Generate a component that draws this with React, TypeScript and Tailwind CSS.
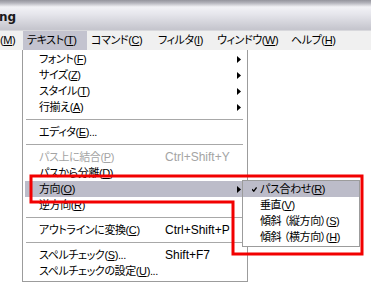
import React from "react";

type Row =
  | { sep: true }
  | {
      label: string;
      k: string;
      after?: string;
      shortcut?: string;
      sub?: boolean;
      disabled?: boolean;
      active?: boolean;
    };

const rows: Row[] = [
  { label: "フォント", k: "F", sub: true },
  { label: "サイズ", k: "Z", sub: true },
  { label: "スタイル", k: "T", sub: true },
  { label: "行揃え", k: "A", sub: true },
  { sep: true },
  { label: "エディタ", k: "E", after: "..." },
  { sep: true },
  { label: "パス上に結合", k: "P", shortcut: "Ctrl+Shift+Y", disabled: true },
  { label: "パスから分離", k: "D" },
  { label: "方向", k: "O", sub: true, active: true },
  { label: "逆方向", k: "R" },
  { sep: true },
  { label: "アウトラインに変換", k: "C", shortcut: "Ctrl+Shift+P" },
  { sep: true },
  { label: "スペルチェック", k: "S", after: "...", shortcut: "Shift+F7" },
  { label: "スペルチェックの設定", k: "U", after: "..." },
];

const subRows = [
  { label: "パス合わせ", k: "R", checked: true },
  { label: "垂直", k: "V" },
  { label: "傾斜 （縦方向）", k: "S" },
  { label: "傾斜 （横方向）", k: "H" },
];

const menus = [
  { label: "テキスト", k: "T", w: "w-[64px]", open: true },
  { label: "コマンド", k: "C", w: "w-[67px]" },
  { label: "フィルタ", k: "I", w: "w-[59px]" },
  { label: "ウィンドウ", k: "W", w: "w-[74px]" },
  { label: "ヘルプ", k: "H", w: "w-[60px]" },
];

function Label({ label, k, after }: { label: string; k: string; after?: string }) {
  return (
    <span className="whitespace-nowrap text-[11px] tracking-[-0.4px]">
      {label}(<u className="underline-offset-[1px]">{k}</u>){after}
    </span>
  );
}

function Arrow() {
  return (
    <svg width="4" height="7" viewBox="0 0 4 7" className="shrink-0">
      <path d="M0 0 L4 3.5 L0 7 Z" fill="#000" />
    </svg>
  );
}

export default function App() {
  return (
    <div className="relative h-[283px] w-[371px] overflow-hidden bg-white text-[12px] leading-none text-black [font-family:'Liberation_Sans','Noto_Sans_CJK_JP',sans-serif] [font-feature-settings:'palt']">
      {/* title bar */}
      <div className="flex h-[30px] items-center bg-[linear-gradient(to_bottom,#94949c_0px,#b4b4bc_3px,#f2f2f6_7px,#e6e6ec_14px,#c6c6ce_29px)] pt-[4px]">
        <span className="-ml-[1px] text-[12px] font-bold text-[#1a1a1a] [font-family:'DejaVu_Sans',sans-serif]">
          ng
        </span>
      </div>

      {/* menu bar */}
      <div className="flex h-[20px] items-stretch border-t border-[#d8d8dc] bg-[#f0f0f0]">
        <div className="flex w-[23px] items-center">
          <span className="text-[11px] tracking-[-0.4px]">
            (<u>M</u>)
          </span>
        </div>
        {menus.map((m) => (
          <div
            key={m.label}
            className={`flex ${m.w} items-center pl-[4px] ${m.open ? "bg-[#c3c3cf]" : ""}`}
          >
            <Label label={m.label} k={m.k} />
          </div>
        ))}
      </div>

      {/* text menu */}
      <div className="ml-[22px] w-[226px] border border-t-0 border-[#9c9c9c] bg-white pb-[2px] pt-[1px]">
        {rows.map((r, i) =>
          "sep" in r ? (
            <div key={i} className="flex h-[9px] items-center pl-[3px] pr-[4px]">
              <div className="h-px w-full bg-[#a8a8a8]" />
            </div>
          ) : (
            <div
              key={i}
              className={`mx-[2px] flex h-[16px] items-center pl-[14px] pr-[4px] ${
                r.active ? "bg-[#bcbcc9]" : ""
              } ${r.disabled ? "text-[#a4a4a4]" : ""}`}
            >
              <div className="w-[126px]">
                <Label label={r.label} k={r.k} after={r.after} />
              </div>
              {r.shortcut && <span className="whitespace-nowrap">{r.shortcut}</span>}
              {r.sub && (
                <div className="ml-auto flex">
                  <Arrow />
                </div>
              )}
            </div>
          )
        )}
      </div>

      {/* submenu */}
      <div className="absolute left-[242px] top-[180px] w-[118px] border border-[#9c9c9c] bg-white pb-[1px]">
        {subRows.map((s) => (
          <div
            key={s.label}
            className={`flex h-[16px] items-center pl-[9px] ${s.checked ? "bg-[#bcbcc9]" : ""}`}
          >
            <div className="w-[8px]">
              {s.checked && (
                <svg width="5" height="5" viewBox="0 0 5 5">
                  <path d="M0 2.2 L1.8 4.2 L4.6 0.4" stroke="#000" strokeWidth="1.3" fill="none" />
                </svg>
              )}
            </div>
            <Label label={s.label} k={s.k} />
          </div>
        ))}
      </div>

      {/* red annotation */}
      <svg className="pointer-events-none absolute left-0 top-0" width="371" height="283">
        <polygon
          points="31,176 362,176 362,254 233,254 233,202 31,202"
          fill="none"
          stroke="#f20000"
          strokeWidth="3"
        />
      </svg>
    </div>
  );
}
